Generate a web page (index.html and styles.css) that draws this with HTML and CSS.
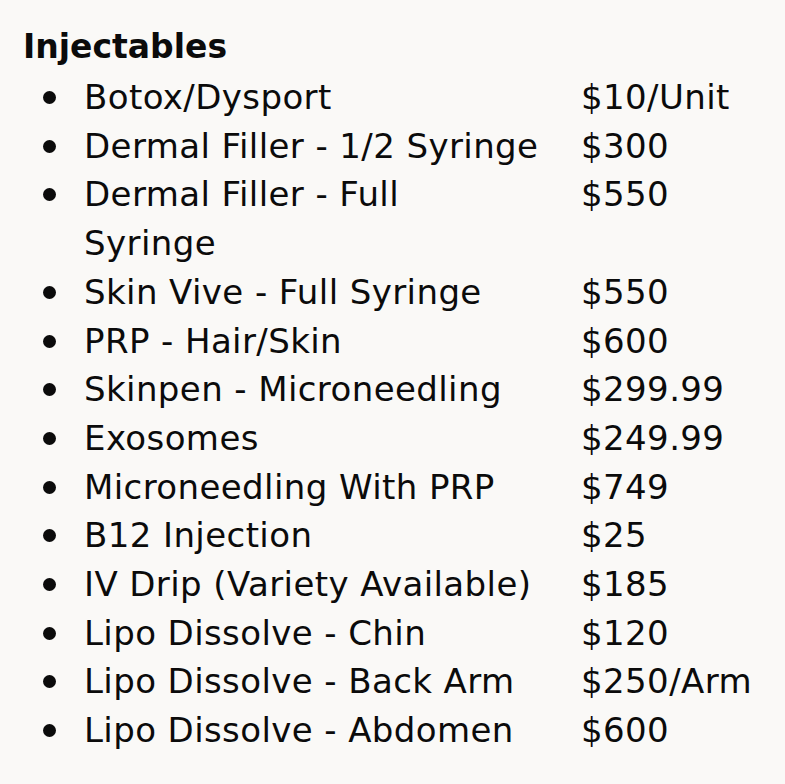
FILE: index.html
```html
<!DOCTYPE html>
<html lang="en">
<head>
<meta charset="utf-8">
<title>Injectables</title>
<link rel="stylesheet" href="styles.css">
</head>
<body>
<section class="menu">
  <h2 class="title">Injectables</h2>
  <ul class="list">
    <li class="item"><span class="dot"></span><span class="name">Botox/Dysport</span><span class="price">$10/Unit</span></li>
    <li class="item"><span class="dot"></span><span class="name">Dermal Filler - 1/2 Syringe</span><span class="price">$300</span></li>
    <li class="item"><span class="dot"></span><span class="name">Dermal Filler - Full<br>Syringe</span><span class="price">$550</span></li>
    <li class="item"><span class="dot"></span><span class="name">Skin Vive - Full Syringe</span><span class="price">$550</span></li>
    <li class="item"><span class="dot"></span><span class="name">PRP - Hair/Skin</span><span class="price">$600</span></li>
    <li class="item"><span class="dot"></span><span class="name">Skinpen - Microneedling</span><span class="price">$299.99</span></li>
    <li class="item"><span class="dot"></span><span class="name">Exosomes</span><span class="price">$249.99</span></li>
    <li class="item"><span class="dot"></span><span class="name">Microneedling With PRP</span><span class="price">$749</span></li>
    <li class="item"><span class="dot"></span><span class="name">B12 Injection</span><span class="price">$25</span></li>
    <li class="item"><span class="dot"></span><span class="name">IV Drip (Variety Available)</span><span class="price">$185</span></li>
    <li class="item"><span class="dot"></span><span class="name">Lipo Dissolve - Chin</span><span class="price">$120</span></li>
    <li class="item"><span class="dot"></span><span class="name">Lipo Dissolve - Back Arm</span><span class="price">$250/Arm</span></li>
    <li class="item"><span class="dot"></span><span class="name">Lipo Dissolve - Abdomen</span><span class="price">$600</span></li>
  </ul>
</section>
</body>
</html>
```

FILE: styles.css
```css
html, body {
  margin: 0;
  padding: 0;
  background: #faf9f7;
}
body {
  font-family: "DejaVu Sans", sans-serif;
  color: #0b0b0b;
}
.menu {
  padding: 25px 0 0 23px;
}
.title {
  margin: 0;
  font-size: 33px;
  font-weight: 700;
  line-height: 44px;
}
.list {
  list-style: none;
  margin: 4px 0 0;
  padding: 0 0 0 20px;
}
.item {
  display: grid;
  grid-template-columns: 41px 497px auto;
  font-size: 34px;
  letter-spacing: 0.4px;
  line-height: 48.7px;
}
.dot {
  width: 13px;
  height: 13px;
  border-radius: 50%;
  background: #0b0b0b;
  margin-top: 18px;
}
```
